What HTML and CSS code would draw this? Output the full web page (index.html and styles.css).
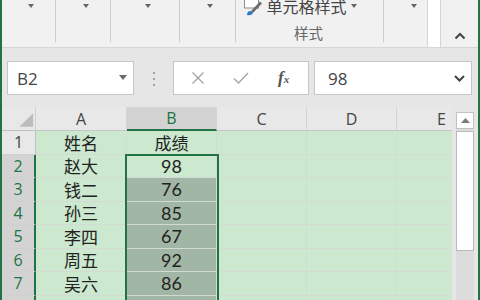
FILE: index.html
```html
<!DOCTYPE html>
<html lang="zh-CN">
<head>
<meta charset="utf-8">
<title>Excel</title>
<link rel="stylesheet" href="styles.css">
</head>
<body>
<div class="app">
  <div class="ribbon">
    <div class="grp g1"><span class="dd"></span></div>
    <div class="grp g2"><span class="dd"></span></div>
    <div class="grp g3"><span class="dd"></span></div>
    <div class="grp g4"><span class="dd"></span></div>
    <div class="grp g5">
      <div class="cellstyle">
        <svg class="csicon" width="20" height="16" viewBox="0 0 20 16">
          <rect x="1.5" y="-4" width="14" height="12" fill="#fff" stroke="#8a8a8a"/>
          <path d="M8 11 L17 1.5 L19 3.5 L10 13 Z" fill="#6d6d6d"/>
          <path d="M4 15 C4 12 6 10.5 8 11 L10 13 C9 15 6.5 15.5 4 15 Z" fill="#2b79c2"/>
        </svg>
        <span class="cstext">单元格样式</span>
        <span class="dd"></span>
      </div>
      <div class="grplabel">样式</div>
    </div>
    <div class="grp g6"><span class="dd"></span></div>
    <div class="strip"></div>
    <div class="collapse">
      <svg width="12" height="8" viewBox="0 0 12 8"><path d="M1.5 6.5 L6 2 L10.5 6.5" fill="none" stroke="#444" stroke-width="2"/></svg>
    </div>
  </div>

  <div class="fbar">
    <div class="namebox"><span class="nbtext">B2</span><span class="dd dark"></span></div>
    <div class="dots"><i></i><i></i><i></i></div>
    <div class="fbtns">
      <svg class="xbtn" width="14" height="14" viewBox="0 0 14 14"><path d="M1.5 1.5 L12.5 12.5 M12.5 1.5 L1.5 12.5" stroke="#a6a6a6" stroke-width="1.4"/></svg>
      <svg class="okbtn" width="16" height="14" viewBox="0 0 16 14"><path d="M1 7.5 L5.5 12 L15 2" fill="none" stroke="#a6a6a6" stroke-width="1.4"/></svg>
      <span class="fx">f<small>x</small></span>
    </div>
    <div class="finput"><span class="fitext">98</span>
      <svg class="fichev" width="11" height="7" viewBox="0 0 11 7"><path d="M1 1 L5.5 5.5 L10 1" fill="none" stroke="#444" stroke-width="2"/></svg>
    </div>
  </div>

  <div class="sheetwrap">
    <div class="sheet">
      <div class="grid">
        <div class="h corner"><svg width="34" height="24" viewBox="0 0 34 24"><path d="M32 6 L32 20 L18 20 Z" fill="#bcbcbc"/></svg></div>
        <div class="h col">A</div>
        <div class="h col hs colsel">B</div>
        <div class="h col">C</div>
        <div class="h col">D</div>
        <div class="h col">E</div>

        <div class="h row">1</div>
        <div class="c cjk">姓名</div>
        <div class="c cjk">成绩</div>
        <div class="c"></div><div class="c"></div><div class="c"></div>

        <div class="h row hs rowsel">2</div>
        <div class="c cjk">赵大</div>
        <div class="c num">98</div>
        <div class="c"></div><div class="c"></div><div class="c"></div>

        <div class="h row hs rowsel">3</div>
        <div class="c cjk">钱二</div>
        <div class="c num dk">76</div>
        <div class="c"></div><div class="c"></div><div class="c"></div>

        <div class="h row hs rowsel">4</div>
        <div class="c cjk">孙三</div>
        <div class="c num dk">85</div>
        <div class="c"></div><div class="c"></div><div class="c"></div>

        <div class="h row hs rowsel">5</div>
        <div class="c cjk">李四</div>
        <div class="c num dk">67</div>
        <div class="c"></div><div class="c"></div><div class="c"></div>

        <div class="h row hs rowsel">6</div>
        <div class="c cjk">周五</div>
        <div class="c num dk">92</div>
        <div class="c"></div><div class="c"></div><div class="c"></div>

        <div class="h row hs rowsel">7</div>
        <div class="c cjk">吴六</div>
        <div class="c num dk">86</div>
        <div class="c"></div><div class="c"></div><div class="c"></div>

        <div class="h row hs rowsel"></div>
        <div class="c"></div>
        <div class="c dk"></div>
        <div class="c"></div><div class="c"></div><div class="c"></div>
      </div>
      <div class="selbox"></div>
    </div>
    <div class="vscroll">
      <div class="sbup"><svg width="9" height="5" viewBox="0 0 9 5"><path d="M0 5 L4.5 0 L9 5 Z" fill="#7a7a7a"/></svg></div>
      <div class="track"><div class="thumb"></div></div>
    </div>
  </div>
</div>
</body>
</html>
```

FILE: styles.css
```css
* { box-sizing: border-box; margin: 0; padding: 0; }
html, body { width: 480px; height: 300px; overflow: hidden; }
body {
  font-family: "Open Sans", "Noto Sans CJK SC", sans-serif;
  background: #e6e6e6;
  color: #444;
}
.app {
  height: 300px;
  display: flex;
  flex-direction: column;
  border-left: 2px solid #217346;
  border-right: 2px solid #217346;
  background: #e6e6e6;
}

/* ribbon */
.ribbon {
  height: 48px;
  flex: none;
  display: flex;
  align-items: flex-start;
  background: #f1f1f1;
  border-bottom: 1px solid #d6d6d6;
}
.grp {
  height: 42px;
  flex: none;
  border-right: 1px solid #cdcdcd;
  display: flex;
  justify-content: center;
  padding-left: 5px;
}
.g1 { width: 54px; }
.g2 { width: 55px; }
.g3 { width: 69px; }
.g4 { width: 56px; }
.g5 {
  width: 148px;
  flex-direction: column;
  align-items: center;
  justify-content: flex-start;
  padding-left: 0;
}
.g6 { width: 43px; border-right: none; padding-left: 16px; }
.dd {
  width: 0; height: 0;
  border-left: 3.5px solid transparent;
  border-right: 3.5px solid transparent;
  border-top: 4px solid #666;
  margin-top: 4px;
}
.cellstyle {
  display: flex;
  align-items: flex-start;
  height: 16px;
  margin-top: -2px;
  width: 148px;
  padding-left: 7px;
}
.csicon { margin-top: 2px; flex: none; }
.cstext {
  font-family: "Noto Sans CJK SC", sans-serif;
  font-size: 16px;
  line-height: 16px;
  color: #444;
  margin-left: 4px;
}
.cellstyle .dd { margin-left: 4px; margin-top: 6px; }
.grplabel {
  font-family: "Noto Sans CJK SC", sans-serif;
  font-size: 14.5px;
  line-height: 16px;
  color: #666;
  margin-top: 11px;
  margin-left: -2px;
}
.strip {
  width: 14px;
  height: 47px;
  flex: none;
  background: #fff;
  border-left: 1px solid #d4d4d4;
  border-right: 1px solid #d4d4d4;
}
.collapse {
  flex: 1;
  display: flex;
  justify-content: center;
  padding-top: 32px;
}

/* formula bar */
.fbar {
  height: 59px;
  flex: none;
  display: flex;
  align-items: flex-start;
  padding-top: 13px;
}
.namebox, .fbtns, .finput {
  height: 34px;
  background: #fff;
  border: 1px solid #c6c6c6;
  display: flex;
  align-items: center;
}
.namebox { width: 127px; margin-left: 5px; padding-left: 9px; }
.nbtext, .fitext {
  font-family: "Open Sans", sans-serif;
  font-size: 17px;
  color: #444;
  flex: 1;
}
.namebox .dd { margin: 0 6px 1px 0; border-left-width: 4px; border-right-width: 4px; border-top-width: 5px; border-top-color: #6a6a6a; }
.dots {
  width: 2px;
  margin-left: 19px;
  margin-top: 11px;
  display: flex;
  flex-direction: column;
  gap: 4px;
}
.dots i { display: block; width: 2px; height: 2px; background: #a0a0a0; }
.fbtns { width: 136px; margin-left: 18px; padding-left: 17px; }
.xbtn { flex: none; }
.okbtn { flex: none; margin-left: 28px; margin-right: 0; }
.fx {
  font-family: "Liberation Serif", serif;
  font-style: italic;
  font-weight: bold;
  font-size: 17px;
  color: #555;
  margin-left: 29px;
}
.fx small { font-size: 11px; }
.finput { width: 158px; margin-left: 5px; padding-left: 13px; padding-right: 6px; }
.fichev { flex: none; }

/* sheet */
.sheetwrap {
  flex: 1;
  display: flex;
  min-height: 0;
}
.sheet {
  width: 450px;
  flex: none;
  overflow: hidden;
  position: relative;
}
.grid {
  display: grid;
  grid-template-columns: 34px 91px 90px 90px 90px 90px;
  grid-template-rows: 24px repeat(8, 23.5px);
  width: 485px;
}
.h {
  background: #e8e8e8;
  display: flex;
  align-items: center;
  justify-content: center;
  font-family: "Open Sans", sans-serif;
  color: #444;
}
.corner { border-right: 1px solid #d0d0d0; border-bottom: 1px solid #c0c0c0; }
.col {
  font-size: 16px;
  border-right: 1px solid #d3d3d3;
  border-bottom: 1px solid #c6c6c6;
}
.row {
  font-size: 16px;
  border-right: 1px solid #c0c0c0;
  border-bottom: 1px solid #d0d0d0;
}
.hs { background: #d3d3d3; color: #217346; }
.colsel { border-bottom: 2px solid #217346; }
.rowsel { border-right: 2px solid #217346; }
.c {
  background: #cce8cf;
  border-right: 1px solid #d2dcd3;
  border-bottom: 1px solid #d2dcd3;
  display: flex;
  align-items: center;
  justify-content: center;
  color: #222;
}
.cjk { font-family: "Noto Sans CJK SC", sans-serif; font-size: 17px; }
.num { font-family: "Lato", "Open Sans", sans-serif; font-size: 18px; }
.dk { background: #a2b6a5; }
.selbox {
  position: absolute;
  left: 123px;
  top: 47px;
  width: 94px;
  height: 200px;
  border: 2px solid #217346;
  pointer-events: none;
}
.vscroll {
  flex: 1;
  display: flex;
  flex-direction: column;
  padding: 5px 4px 0 4px;
}
.sbup {
  height: 17px;
  background: #fff;
  border: 1px solid #c2c2c2;
  display: flex;
  align-items: center;
  justify-content: center;
}
.track {
  flex: 1;
  background: #dcdcdc;
  padding-top: 2px;
}
.thumb {
  height: 120px;
  background: #fff;
  border: 1px solid #b9b9b9;
}
```
